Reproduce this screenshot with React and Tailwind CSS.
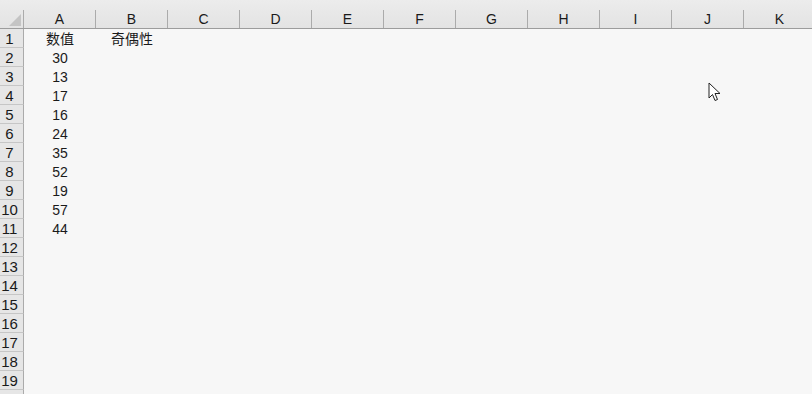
const columns = ["A", "B", "C", "D", "E", "F", "G", "H", "I", "J", "K"];

const cells = {
  1: { A: "数值", B: "奇偶性" },
  2: { A: "30" },
  3: { A: "13" },
  4: { A: "17" },
  5: { A: "16" },
  6: { A: "24" },
  7: { A: "35" },
  8: { A: "52" },
  9: { A: "19" },
  10: { A: "57" },
  11: { A: "44" },
};

const rows = Array.from({ length: 19 }, (_, i) => i + 1);

const font = {
  fontFamily: '"Liberation Sans", "Noto Sans CJK SC", sans-serif',
};

const App = () => {
  return (
    <div
      className="relative w-[812px] h-[394px] overflow-hidden bg-[#f7f7f7] text-[#1a1a1a]"
      style={font}
    >
      {/* Column headers */}
      <div className="flex h-[29px] border-b border-[#9c9c9c] bg-gradient-to-b from-[#ececec] to-[#e3e3e3]">
        <div className="w-[24px] shrink-0 flex flex-col justify-end">
          <div className="h-[18px] border-r border-[#ababab] flex items-end justify-end pr-[2px] pb-[2px]">
            <div className="w-0 h-0 border-l-[12px] border-l-transparent border-b-[12px] border-b-[#c4c4c4]" />
          </div>
        </div>
        {columns.map((c) => (
          <div key={c} className="w-[72px] shrink-0 flex flex-col justify-end">
            <div className="h-[18px] border-r border-[#ababab] flex items-center justify-center text-[14px] leading-none">
              {c}
            </div>
          </div>
        ))}
      </div>

      {/* Rows */}
      {rows.map((r) => (
        <div key={r} className="flex h-[19px]">
          <div className="w-[24px] shrink-0 border-r border-b border-r-[#ababab] border-b-[#c6c6c6] bg-[#e6e6e6]">
            <div className="w-[19px] h-full flex items-center justify-center text-[15px] leading-none">
              {r}
            </div>
          </div>
          {columns.map((c) => (
            <div
              key={c}
              className="w-[72px] shrink-0 flex items-center justify-center text-[14px] leading-none"
            >
              {cells[r]?.[c] ?? ""}
            </div>
          ))}
        </div>
      ))}

      {/* Partly visible next row */}
      <div className="flex h-[19px]">
        <div className="w-[24px] shrink-0 border-r border-[#ababab] bg-[#e6e6e6]" />
      </div>

      {/* Mouse pointer */}
      <svg
        className="absolute left-[708px] top-[82px]"
        width="14"
        height="20"
        viewBox="0 0 14 20"
      >
        <path
          d="M1 1 L1 16 L4.5 12.5 L7 18.5 L9.5 17.5 L7 11.5 L12 11.5 Z"
          fill="#ffffff"
          stroke="#222222"
          strokeWidth="1"
          strokeLinejoin="miter"
        />
      </svg>
    </div>
  );
};

export default App;
